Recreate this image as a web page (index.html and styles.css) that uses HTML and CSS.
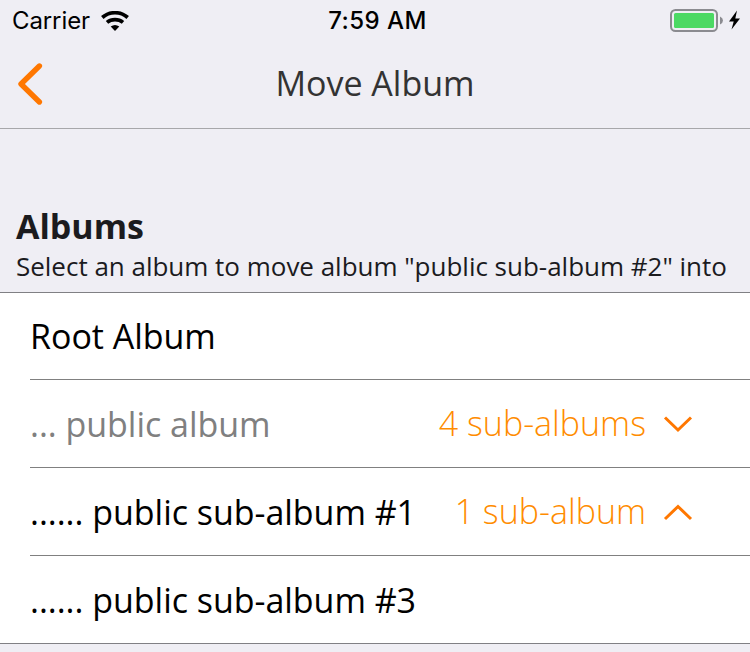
FILE: index.html
```html
<!DOCTYPE html>
<html lang="en">
<head>
<meta charset="utf-8">
<title>Move Album</title>
<link rel="stylesheet" href="styles.css">
</head>
<body>
<header class="top">
  <div class="status">
    <div class="carrier"><span class="carrier-name">Carrier</span>
      <svg class="wifi" width="28" height="20" viewBox="0 0 28 20"><g fill="none" stroke="#000" stroke-width="3.700"><path d="M1.300 6.500C8.500 .100 19.500 .100 26.700 6.500"/><path d="M6 11.400C10.500 7.600 17.500 7.600 22 11.400"/></g><path d="M9.700 15.600Q14 12.200 18.300 15.600L14 20Z"/></svg>
    </div>
    <div class="time"><span>7:59 AM</span></div>
    <div class="power">
      <svg width="72" height="24" viewBox="0 0 72 24"><rect x="1" y="1" width="46" height="21" rx="4.500" fill="none" stroke="#8b8b90" stroke-width="2"/><rect x="4" y="4" width="40" height="15" rx="1.500" fill="#4cd964"/><path d="M50 7.500Q53 9 53 11.500T50 15.500Z" fill="#8b8b90"/><path d="M67 1.500L59 12.500H63.700L61.500 20.500L70 9.500H65.300Z"/></svg>
    </div>
  </div>
  <nav class="nav">
    <svg class="back" width="28" height="44" viewBox="0 0 28 44"><path d="M23.400 4L5 22L23.400 40" fill="none" stroke="#ff7700" stroke-width="5.400" stroke-linecap="round" stroke-linejoin="round"/></svg>
    <h1 class="title"><span>Move Album</span></h1>
  </nav>
</header>
<main>
  <section class="intro">
    <h2><span>Albums</span></h2>
    <p><span>Select an album to move album "public sub-album #2" into</span></p>
  </section>
  <ul class="list">
    <li><span class="name">Root Album</span></li>
    <li><span class="name muted">... public album</span><span class="count">4 sub-albums</span><svg class="chev" width="30" height="18" viewBox="0 0 30 18"><path d="M2 2.500L15 15L28 2.500"/></svg></li>
    <li><span class="name">...... public sub-album #1</span><span class="count">1 sub-album</span><svg class="chev" width="30" height="18" viewBox="0 0 30 18"><path d="M2 16L15 3.500L28 16"/></svg></li>
    <li><span class="name">...... public sub-album #3</span></li>
  </ul>
</main>
</body>
</html>
```
FILE: styles.css
```css
* { box-sizing: border-box; }
body { margin: 0; width: 750px; height: 652px; overflow: hidden; background: #efeef4; color: #000; font-family: "Open Sans", sans-serif; }
.top { height: 129px; border-bottom: 1px solid #a7a7aa; }
.status { height: 42px; display: grid; grid-template-columns: 1fr 1fr 1fr; align-items: center; font: 24px/40px Inter, sans-serif; }
.carrier { display: flex; align-items: center; padding-left: 12px; gap: 11px; }
.carrier-name { letter-spacing: -0.1px; }
.wifi { margin-top: -1px; }
.time { text-align: center; font-weight: 500; letter-spacing: 0.45px; padding-left: 5px; }
.power { display: flex; justify-content: flex-end; padding-right: 8px; }
.nav { height: 84px; display: grid; grid-template-columns: 46px 1fr 46px; align-items: center; }
.back { margin-left: 16px; }
.title { margin: -2px 0 0; font-size: 34px; line-height: 46px; font-weight: 400; color: #333; text-align: center; }
.intro { height: 164px; padding: 75px 16px 0; border-bottom: 1px solid #808084; color: #1b1b1e; }
.intro h2 { margin: 0; font-size: 34px; line-height: 44px; font-weight: 700; }
.intro p { margin: 0; font-size: 26px; line-height: 36px; letter-spacing: -0.015px; white-space: nowrap; }
.list { margin: 0; padding: 0 0 0 30px; list-style: none; background: #fff; border-bottom: 1px solid #808084; }
.list li { height: 88px; display: flex; align-items: center; padding-right: 57px; border-bottom: 1px solid #808080; font-size: 34px; line-height: 46px; white-space: nowrap; }
.list li:first-child { height: 87px; }
.list li:last-child { height: 87px; border: 0; }
.name { padding-top: 1px; letter-spacing: -0.03px; }
.list li:first-child .name { padding-top: 0; }
.muted { color: #808080; }
.count { margin-left: auto; margin-right: 17px; padding-bottom: 1px; color: #ff8c00; font-weight: 300; }
.chev { fill: none; stroke: #ff7700; stroke-width: 3; }
```
